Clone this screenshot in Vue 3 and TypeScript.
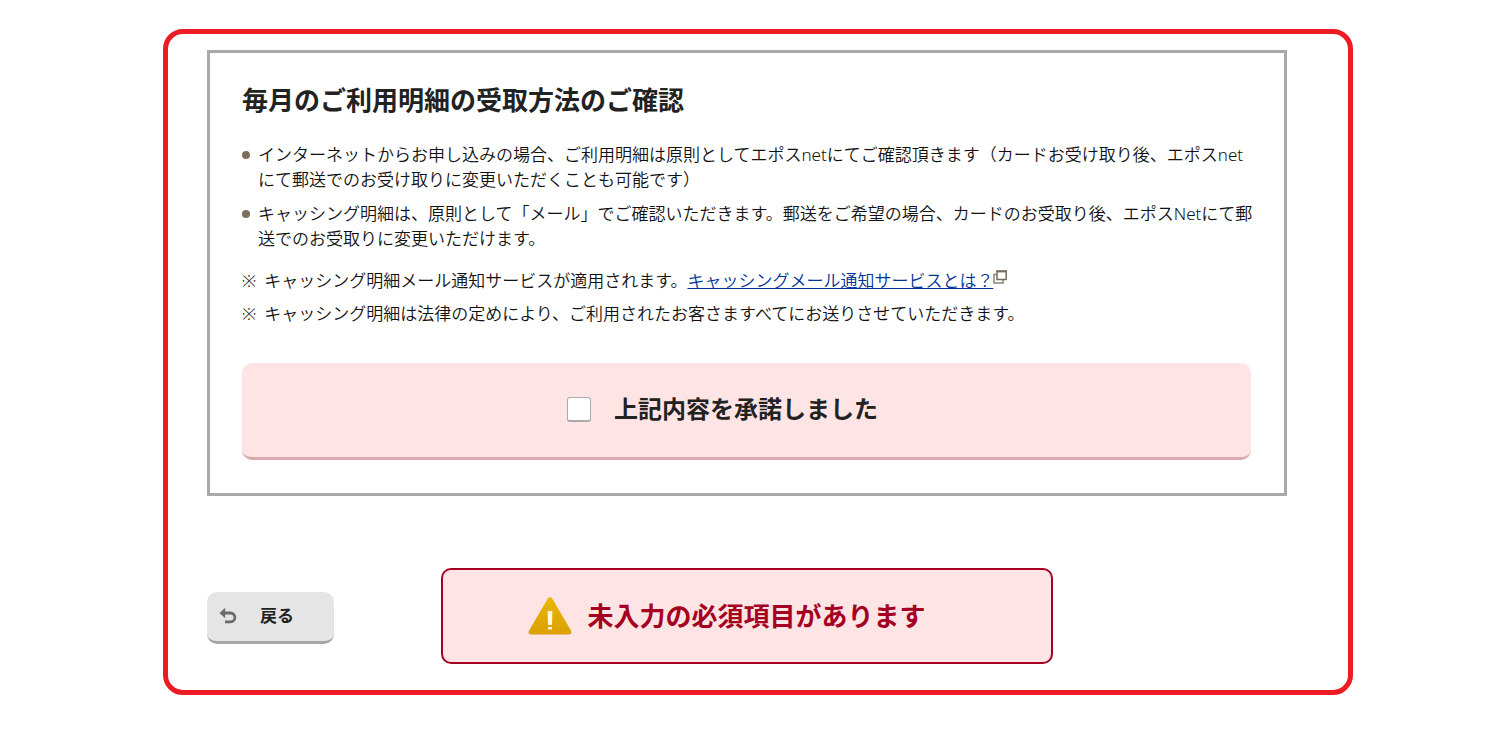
<script setup lang="ts">
import { ref } from 'vue'

const accepted = ref(false)

const items: string[] = [
  'インターネットからお申し込みの場合、ご利用明細は原則としてエポスnetにてご確認頂きます（カードお受け取り後、エポスnetにて郵送でのお受け取りに変更いただくことも可能です）',
  'キャッシング明細は、原則として「メール」でご確認いただきます。郵送をご希望の場合、カードのお受取り後、エポスNetにて郵送でのお受取りに変更いただけます。',
]
</script>

<template>
  <main class="page">
    <div class="frame">
      <section class="box">
        <h2 class="title">毎月のご利用明細の受取方法のご確認</h2>
        <ul class="items">
          <li v-for="item in items" :key="item" class="item">{{ item }}</li>
        </ul>
        <div class="notes">
          <p class="note">
            <span>※</span>
            <span>キャッシング明細メール通知サービスが適用されます。<a class="link" href="#">キャッシングメール通知サービスとは？</a><svg class="window-icon" viewBox="0 0 14 14" aria-hidden="true">
              <path d="M4 4.5H1V13H10V10" fill="none" stroke="#8a8275" stroke-width="1.5" />
              <rect x="4" y="1.5" width="9.2" height="8" fill="#fff" stroke="#766c5e" stroke-width="1.5" />
              <path d="M3.3 1.2H14" stroke="#766c5e" stroke-width="2" />
            </svg></span>
          </p>
          <p class="note">
            <span>※</span>
            <span>キャッシング明細は法律の定めにより、ご利用されたお客さますべてにお送りさせていただきます。</span>
          </p>
        </div>
        <label class="consent" for="accept">
          <input id="accept" v-model="accepted" class="check" type="checkbox" />
          <span>上記内容を承諾しました</span>
        </label>
      </section>

      <div class="actions">
        <button class="back" type="button">
          <svg class="back-icon" viewBox="0 0 18 18" aria-hidden="true">
            <path d="M4.5 6H11.5A4.2 4.2 0 0 1 11.5 14.8H6" fill="none" stroke="#6a6a6a" stroke-width="2.8" />
            <path d="M.5 6L6.2 .8V11.2Z" fill="#6a6a6a" />
          </svg>
          <span>戻る</span>
        </button>
        <button class="alert" type="button">
          <svg class="alert-icon" viewBox="0 0 44 38" aria-hidden="true">
            <defs>
              <linearGradient id="amber" x1="0" y1="0" x2="0" y2="1">
                <stop offset="0" stop-color="#e8b800" />
                <stop offset="1" stop-color="#dc9f00" />
              </linearGradient>
            </defs>
            <path d="M19.8 1.5Q22 -1 24.2 1.5L43.2 34Q44 37.5 41.2 37.5H2.8Q0 37.5 .8 34Z" fill="url(#amber)" />
            <path d="M19.6 14H24.4L24 28H20Z" fill="#fff8df" />
            <rect x="19.8" y="30" width="4.4" height="2.6" rx="1" fill="#fff8df" />
          </svg>
          <span>未入力の必須項目があります</span>
        </button>
      </div>
    </div>
  </main>
</template>

<style>
body {
  margin: 0;
  background: #fff;
}
</style>

<style scoped>
.page {
  padding: 29px 140px 29px 163px;
  color: #222;
  font-family: "Noto Sans", "Noto Sans CJK JP", sans-serif;
  font-size: 17px;
  line-height: 25px;
}

.frame {
  padding: 16px 61px 26px 39px;
  border: 5px solid #ed1c24;
  border-radius: 20px;
}

.box {
  padding: 32px 33px 33px 32px;
  border: 3px solid #a9a9a9;
}

.title {
  margin: 0 0 27px;
  font-size: 26px;
  line-height: 30px;
  font-weight: 700;
}

.items {
  display: grid;
  gap: 9px;
  margin: 0 -8px 0 0;
  padding: 0;
  list-style: none;
  color: #111;
  font-weight: 350;
}

.item {
  display: grid;
  grid-template-columns: 8px 1fr;
  column-gap: 8px;
}

.item::before {
  content: "";
  width: 8px;
  height: 8px;
  margin-top: 9px;
  border-radius: 50%;
  background: #7c705c;
}

.notes {
  display: grid;
  gap: 8px;
  margin: 17px 0 37px;
  color: #111;
  font-weight: 350;
}

.note {
  display: flex;
  gap: 8px;
  margin: 0;
}

.link {
  color: #003399;
  text-decoration: underline;
}

.window-icon {
  width: 14px;
  height: 14px;
  vertical-align: 3px;
}

.consent {
  display: flex;
  align-items: center;
  justify-content: center;
  gap: 23px;
  padding: 28px 48px 30px 0;
  border-bottom: 3px solid #d9abad;
  border-radius: 10px;
  background: #ffe4e5;
  font-size: 24px;
  line-height: 36px;
  font-weight: 700;
}

.check {
  appearance: none;
  box-sizing: border-box;
  width: 24px;
  height: 25px;
  margin: 0;
  border: 1px solid #aaa;
  border-bottom-width: 2px;
  border-radius: 3px;
  background: #fff;
}

.check:checked {
  background: #a50021;
}

.actions {
  display: grid;
  grid-template-columns: 1fr minmax(0, 612px) 1fr;
  align-items: center;
  margin-top: 72px;
}

.back {
  display: flex;
  align-items: center;
  justify-self: start;
  gap: 23px;
  margin-top: 4px;
  padding: 11px 40px 13px 12px;
  border: 0;
  border-bottom: 3px solid #a6a6a6;
  border-radius: 10px;
  background: #e5e5e5;
  color: #222;
  font: inherit;
  font-weight: 700;
}

.back-icon {
  width: 18px;
  height: 18px;
}

.alert {
  display: flex;
  align-items: center;
  justify-content: center;
  gap: 15px;
  padding: 27px 40px 27px 0;
  border: 2px solid #a50021;
  border-radius: 10px;
  background: #ffe4e5;
  color: #a50021;
  font: inherit;
  font-size: 26px;
  line-height: 38px;
  font-weight: 700;
}

.alert-icon {
  width: 44px;
  height: 38px;
}
</style>
